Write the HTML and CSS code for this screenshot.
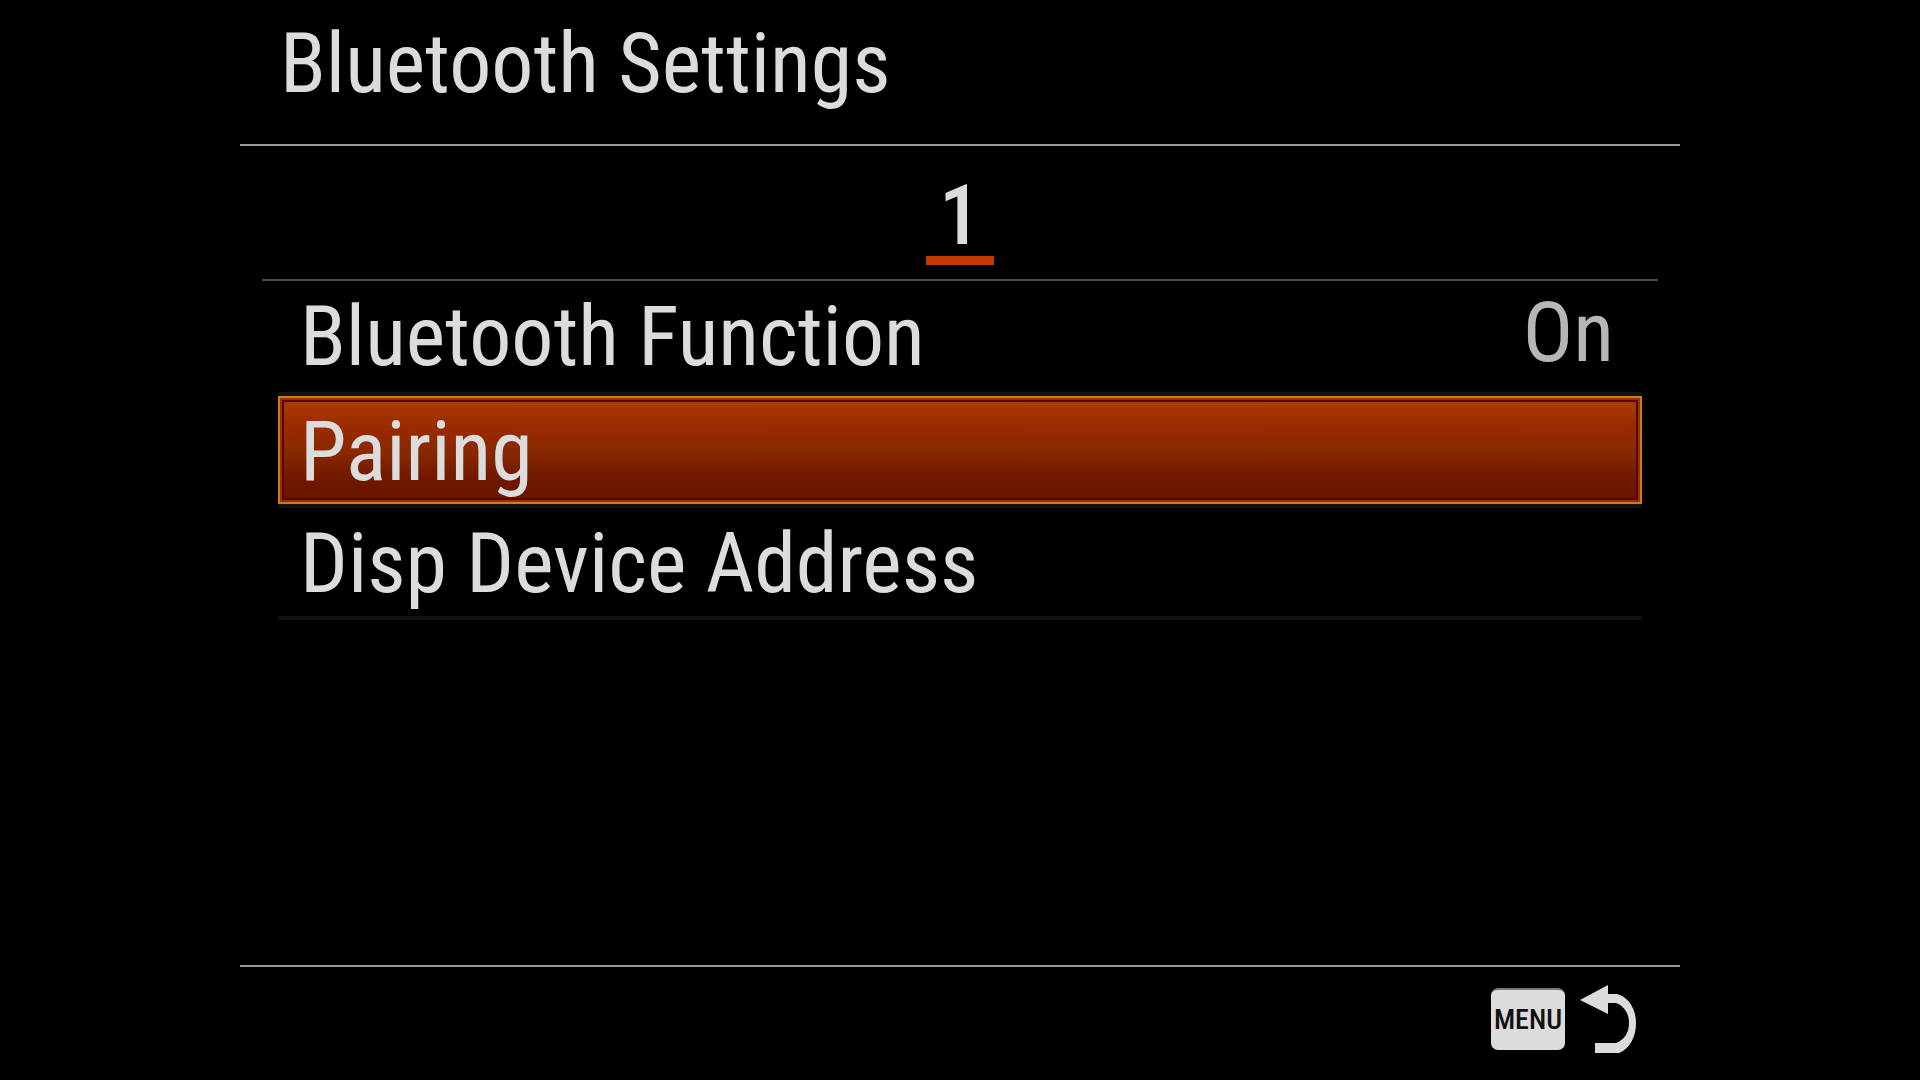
FILE: index.html
```html
<!DOCTYPE html>
<html lang="en">
<head>
<meta charset="utf-8">
<title>Bluetooth Settings</title>
<link rel="stylesheet" href="styles.css">
</head>
<body>
<main class="screen">
  <header class="header"><h1 class="title">Bluetooth Settings</h1></header>
  <nav class="tabs" aria-label="Pages"><button class="tab" type="button" aria-current="page">1</button></nav>
  <section class="menu">
    <button class="item" type="button"><span>Bluetooth Function</span><span class="value">On</span></button>
    <button class="item selected" type="button"><span>Pairing</span></button>
    <button class="item" type="button"><span>Disp Device Address</span></button>
  </section>
  <footer class="footer">
    <button class="back" type="button" aria-label="Menu, back">
      <span class="key">MENU</span>
      <svg class="arrow" viewBox="0 0 56 68" aria-hidden="true">
        <path d="M0 15 28 0V9H37C48 12 56 23 56 38C56 53 49 64 39 68H15V58H36C44 55 49 48 49 38C49 28 44 21 36 18H28V29Z" fill="#dcdcdc"/>
      </svg>
    </button>
  </footer>
</main>
</body>
</html>
```
FILE: styles.css
```css
* {
  box-sizing: border-box;
}

body {
  margin: 0;
  background: #000;
  color: #dcdcdc;
  font-family: "Roboto Condensed", "Arial Narrow", "Liberation Sans", sans-serif;
}

button {
  margin: 0;
  padding: 0;
  border: 0;
  background: none;
  color: inherit;
  font: inherit;
}

.screen {
  display: flex;
  flex-direction: column;
  width: 75%;
  min-height: 100vh;
  margin: 0 auto;
}

.header {
  padding: 13px 40px 29px;
  border-bottom: 2px solid #999;
}

.title {
  margin: 0;
  font-size: 84px;
  font-weight: 400;
  line-height: 102px;
}

.tabs {
  display: flex;
  justify-content: center;
  margin: 0 22px;
  padding: 30px 0 14px;
  border-bottom: 2px solid #484848;
}

.tab {
  width: 68px;
  border-bottom: 9px solid #c23a00;
  font-size: 84px;
  font-weight: 500;
  line-height: 80px;
}

.menu {
  flex: 1;
  margin: 0 38px;
}

.item {
  display: flex;
  justify-content: space-between;
  width: 100%;
  height: 112px;
  padding: 0 28px 0 22px;
  border-bottom: 4px solid #121212;
  font-size: 84px;
  line-height: 112px;
  text-align: left;
}

.item:first-child {
  height: 115px;
}

.value {
  color: #b6b6b6;
  line-height: 104px;
}

.selected {
  background: linear-gradient(#ac4000, #9a2b00 28%, #872800 52%, #701800 76%, #681500) padding-box;
  box-shadow: inset 0 0 0 2px #d07a1c, inset 0 0 0 4px #963200, inset 0 0 0 6px #560500;
}

.footer {
  display: flex;
  justify-content: flex-end;
  padding: 18px 44px 27px;
  border-top: 2px solid #999;
}

.back {
  display: flex;
  align-items: center;
  gap: 15px;
}

.key {
  width: 74px;
  border-top: 2px solid #777;
  border-radius: 7px;
  background: #dcdcdc;
  color: #111;
  font-size: 28px;
  font-weight: 500;
  line-height: 60px;
}

.arrow {
  width: 56px;
  height: 68px;
}
```
